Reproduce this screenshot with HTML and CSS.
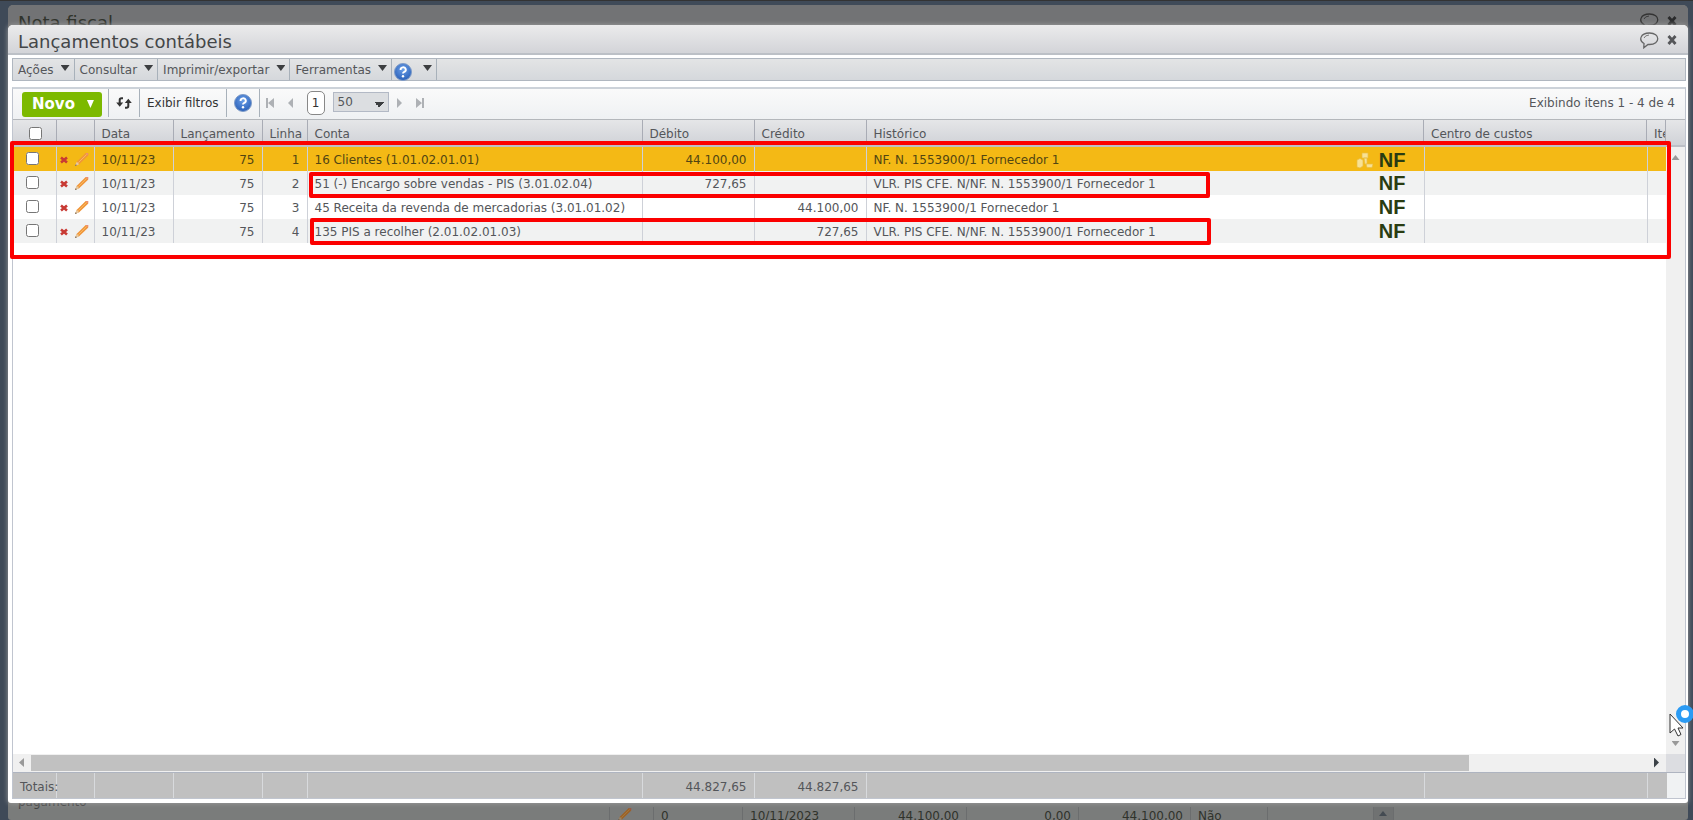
FILE: index.html
```html
<!DOCTYPE html>
<html lang="pt-BR">
<head>
<meta charset="utf-8">
<title>Lançamentos contábeis</title>
<link rel="stylesheet" href="styles.css">
</head>
<body>
<svg class="defs" aria-hidden="true">
  <defs>
    <radialGradient id="blue" cx="50%" cy="35%" r="65%"><stop offset="0" stop-color="#6b9fe8"/><stop offset="1" stop-color="#2a60b8"/></radialGradient>
  </defs>
  <symbol id="help" viewBox="0 0 18 18"><circle cx="9" cy="9" r="8.5" fill="url(#blue)" stroke="#7f9cc8"/><path d="M6.6 7 A2.6 2.4 0 1 1 10 9 Q9 9.5 9 10.6" fill="none" stroke="#fff" stroke-width="1.9"/><circle cx="9" cy="13.2" r="1.2" fill="#fff"/></symbol>
  <symbol id="pencil" viewBox="0 0 16 16"><path d="M1 15 L3 10.5 L12.5 1 L15.2 1.2 L15 4 L5.5 13 Z" fill="#f0953a"/><path d="M1 15 L3 10.5 L5.5 13 Z" fill="#e6cba4"/><path d="M1 15 L2 13 L3 14 Z" fill="#555"/><path d="M12.5 1 L15.2 1.2 L15 4 Z" fill="#ec8a78"/><path d="M4.5 11.5 L13.5 2.6" stroke="#f9bd62" stroke-width="1"/></symbol>
  <symbol id="cross" viewBox="0 0 8 8"><path d="M1 1.500 L7 6.500 M7 1.500 L1 6.500" stroke="#c83a34" stroke-width="2.600"/></symbol>
  <symbol id="close" viewBox="0 0 10 10"><path d="M1.5 1 L8.5 9 M8.5 1 L1.5 9" stroke="#555659" stroke-width="2.8"/></symbol>
  <symbol id="bubble" viewBox="0 0 19 17"><path d="M4 11.500 C-1.500 8.500 0 1 9.500 1 C20.500 1 20.500 12.500 9.500 12.500 H8 L3.800 15.800 Z" fill="none" stroke="#666" stroke-width="1.300"/><path d="M4 6 Q5 3.300 9 3" fill="none" stroke="#777"/></symbol>
  <symbol id="boxes" viewBox="0 0 17 17"><path d="M6 1 h6 v5 h-6 Z M1 8 l3-1.500 l3 1.500 v6 l-3 2 l-3-1 Z M8 6 h3 v6 h-2 Z M10 12 h7 l-1 3.500 h-5 Z" fill="#f8e194" stroke="#e8be45" stroke-width=".7"/></symbol>
</svg>

<section class="window window-back" aria-hidden="true">
  <header class="titlebar"><h2 class="title">Nota fiscal</h2>
    <span class="window-tools"><svg class="bubble"><use href="#bubble"/></svg><svg class="close"><use href="#close"/></svg></span></header>
  <div class="back-body"><span class="back-label">pagamento</span>
    <div class="back-grid"><span><svg class="pencil"><use href="#pencil"/></svg></span><span>0</span><span>10/11/2023</span><span class="num">44.100,00</span><span class="num">0,00</span><span class="num">44.100,00</span><span>Não</span><span></span><span class="back-scroll"><i class="arrow up"></i></span><span></span></div>
  </div>
</section>

<main class="window window-front">
  <header class="titlebar"><h1 class="title">Lançamentos contábeis</h1>
    <span class="window-tools"><button aria-label="Comentários"><svg class="bubble"><use href="#bubble"/></svg></button><button aria-label="Fechar"><svg class="close"><use href="#close"/></svg></button></span></header>
  <div class="content">
    <nav class="menubar">
      <button>Ações<i class="caret"></i></button><button>Consultar<i class="caret"></i></button><button>Imprimir/exportar<i class="caret"></i></button><button>Ferramentas<i class="caret"></i></button><button class="menu-help" aria-label="Ajuda"><svg class="help"><use href="#help"/></svg><i class="caret"></i></button>
    </nav>
    <section class="panel">
      <div class="toolbar">
        <div class="tool"><button class="new">Novo<i class="caret"></i></button></div>
        <div class="tool"><button aria-label="Atualizar"><svg width="16" height="12" viewBox="0 0 16 12"><path d="M7 1.200 H5.500 Q3.700 1.200 3.700 3 V7" fill="none" stroke="#333" stroke-width="2"/><path d="M0 4.500 H7.200 M8.800 7 H16" stroke="#333" stroke-width="0"/><path d="M.2 5.500 H7.200 L3.700 9.800 Z M8.800 6 L12.300 1.700 L15.800 6 Z" fill="#333"/><path d="M12.300 5 V9 Q12.300 10.800 10.500 10.800 H9" fill="none" stroke="#333" stroke-width="2"/></svg></button></div>
        <div class="tool"><button>Exibir filtros</button></div>
        <div class="tool"><button aria-label="Ajuda"><svg class="help"><use href="#help"/></svg></button></div>
        <div class="pager">
          <button aria-label="Primeira"><svg width="8" height="10"><path d="M0 0 H2 V10 H0 Z M8 0 V10 L2 5 Z"/></svg></button>
          <button aria-label="Anterior"><svg width="5" height="10"><path d="M5 0 V10 L0 5 Z"/></svg></button>
          <input class="page" aria-label="Página" value="1">
          <select class="size" aria-label="Itens por página"><option>50</option></select>
          <button aria-label="Próxima"><svg width="5" height="10"><path d="M0 0 V10 L5 5 Z"/></svg></button>
          <button aria-label="Última"><svg width="8" height="10"><path d="M6 0 H8 V10 H6 Z M0 0 V10 L6 5 Z"/></svg></button>
        </div>
        <span class="count">Exibindo itens 1 - 4 de 4</span>
      </div>
      <div class="head">
        <table class="grid">
          <colgroup><col class="c-check"><col class="c-act"><col class="c-date"><col class="c-entry"><col class="c-line"><col class="c-account"><col class="c-money"><col class="c-money"><col><col class="c-cost"><col class="c-item"></colgroup>
          <thead><tr><th class="check"><input type="checkbox" aria-label="Selecionar todos"></th><th></th><th>Data</th><th>Lançamento</th><th>Linha</th><th>Conta</th><th>Débito</th><th>Crédito</th><th>Histórico</th><th>Centro de custos</th><th>Ite</th></tr></thead>
        </table>
      </div>
      <div class="body">
        <div class="rows">
          <table class="grid">
            <colgroup><col class="c-check"><col class="c-act"><col class="c-date"><col class="c-entry"><col class="c-line"><col class="c-account"><col class="c-money"><col class="c-money"><col><col class="c-cost"><col class="c-item"></colgroup>
            <tbody>
              <tr class="selected"><td class="check"><input type="checkbox" aria-label="Linha 1"></td><td class="acts-cell"><div class="acts"><svg class="cross"><use href="#cross"/></svg><svg class="pencil"><use href="#pencil"/></svg></div></td><td>10/11/23</td><td class="num">75</td><td class="num">1</td><td>16 Clientes (1.01.02.01.01)</td><td class="num">44.100,00</td><td></td><td><div class="hist">NF. N. 1553900/1 Fornecedor 1<span class="marks"><svg class="boxes"><use href="#boxes"/></svg><b class="nf">NF</b></span></div></td><td></td><td></td></tr>
              <tr><td class="check"><input type="checkbox" aria-label="Linha 2"></td><td class="acts-cell"><div class="acts"><svg class="cross"><use href="#cross"/></svg><svg class="pencil"><use href="#pencil"/></svg></div></td><td>10/11/23</td><td class="num">75</td><td class="num">2</td><td>51 (-) Encargo sobre vendas - PIS (3.01.02.04)</td><td class="num">727,65</td><td></td><td><div class="hist">VLR. PIS CFE. N/NF. N. 1553900/1 Fornecedor 1<span class="marks"><b class="nf">NF</b></span></div></td><td></td><td></td></tr>
              <tr><td class="check"><input type="checkbox" aria-label="Linha 3"></td><td class="acts-cell"><div class="acts"><svg class="cross"><use href="#cross"/></svg><svg class="pencil"><use href="#pencil"/></svg></div></td><td>10/11/23</td><td class="num">75</td><td class="num">3</td><td>45 Receita da revenda de mercadorias (3.01.01.02)</td><td></td><td class="num">44.100,00</td><td><div class="hist">NF. N. 1553900/1 Fornecedor 1<span class="marks"><b class="nf">NF</b></span></div></td><td></td><td></td></tr>
              <tr><td class="check"><input type="checkbox" aria-label="Linha 4"></td><td class="acts-cell"><div class="acts"><svg class="cross"><use href="#cross"/></svg><svg class="pencil"><use href="#pencil"/></svg></div></td><td>10/11/23</td><td class="num">75</td><td class="num">4</td><td>135 PIS a recolher (2.01.02.01.03)</td><td></td><td class="num">727,65</td><td><div class="hist">VLR. PIS CFE. N/NF. N. 1553900/1 Fornecedor 1<span class="marks"><b class="nf">NF</b></span></div></td><td></td><td></td></tr>
            </tbody>
          </table>
          <div class="note note-all"></div><div class="note note-two"></div><div class="note note-four"></div>
        </div>
        <div class="vscroll"><i class="arrow up"></i><i class="arrow down"></i></div>
        <div class="hscroll"><i class="arrow left"></i><div class="track"><div class="thumb"></div></div><i class="arrow right"></i></div>
        <div class="corner"></div>
      </div>
      <div class="foot">
        <table class="grid">
          <colgroup><col class="c-check"><col class="c-act"><col class="c-date"><col class="c-entry"><col class="c-line"><col class="c-account"><col class="c-money"><col class="c-money"><col><col class="c-cost"><col class="c-item"></colgroup>
          <tbody><tr><td class="total">Totais:</td><td></td><td></td><td></td><td></td><td></td><td class="num">44.827,65</td><td class="num">44.827,65</td><td></td><td></td><td></td></tr></tbody>
        </table>
      </div>
    </section>
  </div>
</main>
<svg class="cursor" width="26" height="34" viewBox="0 0 26 34" aria-hidden="true"><circle cx="16" cy="10" r="6.500" fill="#fff" stroke="#2b9bf4" stroke-width="5"/><path d="M1 10 V29 L5.500 25 L9 32 L12 30.500 L9 24 H14 Z" fill="#fff" stroke="#333"/></svg>
</body>
</html>
```
FILE: styles.css
```css
* { box-sizing: border-box; }
body { margin: 0; height: 100vh; overflow: hidden; background: #3f4a58; border-top: 1px solid #333; font: 12px "DejaVu Sans", Verdana, sans-serif; color: #54565a; }
.defs { position: absolute; width: 0; height: 0; }
svg { display: block; fill: currentColor; flex: none; }
button { display: flex; align-items: center; margin: 0; padding: 0; border: 0; background: none; font: inherit; color: inherit; }
.window { position: absolute; display: flex; flex-direction: column; border-radius: 5px 5px 3px 3px; }
.window-back { inset: 5px 5px 0 8px; overflow: hidden; background: #7a7c7b; color: #30332c; }
.window-front { inset: 25px 5px 17px 8px; background: #fff; box-shadow: 0 0 5px #a0a0a0; }
.titlebar { display: flex; align-items: center; justify-content: space-between; height: 30px; flex: none; padding: 2px 11px 0 10px; border-bottom: 2px solid #bcc0c6; border-radius: 5px 5px 0 0; background: linear-gradient(#ebebec, #d3d4d8); }
.window-back .titlebar { background: #727375; border: 0; }
.title { margin: 0; padding-top: 4px; font-size: 18px; font-weight: 400; line-height: 24px; color: #444648; }
.window-back .title { color: #30332c; }
.window-tools { display: flex; align-items: center; gap: 8px; }
.bubble { width: 19px; height: 17px; }
.close { width: 10px; height: 10px; }
.window-back .window-tools { filter: brightness(.5); }
.back-body { flex: 1; display: flex; flex-direction: column; justify-content: flex-end; }
.back-label { padding-left: 10px; color: #444; line-height: 10px; }
.back-grid { display: grid; grid-template-columns: 44px 89px 112px 112px 112px 112px 77px 106px 20px 1fr; height: 13px; margin-left: 601px; line-height: 18px; }
.back-grid span { border-left: 1px solid #6b6d6e; padding: 0 7px; }
.back-grid .num { padding: 0 7px 0 0; text-align: right; }
.back-grid .pencil { filter: brightness(.65); }
.back-grid .back-scroll { display: flex; padding: 4px 5px; background: #707272; }
.back-grid .arrow { background: #444b52; }
.content { flex: 1; min-height: 0; display: flex; flex-direction: column; gap: 6px; padding: 3px 2px 4px 4px; }
.menubar { display: flex; flex: none; height: 23px; border: 1px solid #b0b7c0; background: linear-gradient(#e3e4e5, #d5d8dc); }
.menubar button { gap: 7px; padding: 0 4px 0 5px; border-right: 1px solid #a8b1ba; }
.caret { width: 9px; height: 6px; margin-bottom: 3px; background: #3c3e40; clip-path: polygon(0 0, 100% 0, 50% 100%); }
.menubar .menu-help { gap: 11px; padding: 0 4px 0 2px; }
.help { width: 18px; height: 18px; }
.menu-help .help { margin-top: 4px; }
.panel { flex: 1; min-height: 0; display: flex; flex-direction: column; border: 1px solid #c0c5cf; border-top: 2px solid #ccd2d9; }
.toolbar { display: flex; align-items: center; flex: none; height: 30px; padding: 0 10px 2px 9px; background: linear-gradient(#fafafa, #eff1f3); }
.tool { display: flex; align-items: center; height: 28px; padding: 0 7px; border-right: 1px solid #a8b1ba; color: #333; }
.tool:first-child { padding: 2px 6px 0 0; }
.new { height: 25px; gap: 12px; padding: 0 8px 0 10px; border-radius: 3px; background: #7cb900; color: #fff; font-size: 15px; font-weight: 700; }
.new .caret { width: 7px; height: 8px; margin: 0; background: #fff; }
.pager { display: flex; align-items: center; color: #aeb1b5; padding-left: 6px; gap: 14px; }
.page { width: 18px; height: 24px; padding: 0; border: 1px solid #888; border-radius: 5px; background: #fff; font: inherit; color: #333; text-align: center; }
.size { appearance: none; width: 56px; height: 20px; margin: 0 -6px 2px; padding: 0 4px; border: 1px solid #b3b9c5; border-radius: 0; font: inherit; color: #54565a; background: linear-gradient(to top right, #0000 50%, #3c3e40 50%) 40px 9px / 5px 5px no-repeat, linear-gradient(to top left, #0000 50%, #3c3e40 50%) 45px 9px / 5px 5px no-repeat, #dcdee1; }
.count { margin-left: auto; }
.head { flex: none; padding-right: 19px; border-top: 1px solid #b4b7bb; border-bottom: 2px solid #bcbfc6; background: linear-gradient(#e5e6e8, #d0d2d7); }
.grid { width: 100%; table-layout: fixed; border-collapse: collapse; }
.c-check { width: 43px; } .c-act { width: 38px; } .c-date { width: 79px; } .c-entry { width: 89px; } .c-line { width: 45px; }
.c-account { width: 335px; } .c-money { width: 112px; } .c-cost { width: 223px; } .c-item { width: 19px; }
.grid th, .grid td { height: 24px; padding: 2px 7px 0; border-right: 1px solid #ced1d8; overflow: hidden; white-space: nowrap; text-align: left; font-weight: 400; line-height: 16px; }
.grid th { height: 25px; border-color: #a9acb5; padding-top: 3px; }
.grid td:last-child { border-right: 0; }
.grid th:last-child { padding-right: 0; }
.grid .num { text-align: right; }
.grid .check { padding: 0 0 0 3px; text-align: center; }
.check input { width: 13px; height: 13px; margin: 0; vertical-align: middle; }
tbody .check input { margin: 0 6px 2px 0; }
.grid .acts-cell { padding: 1px 5px 0 3px; }
.acts { display: flex; align-items: center; justify-content: space-between; }
.cross { width: 8px; height: 8px; }
.pencil { width: 15px; height: 15px; }
.selected { background: #f4b915; color: #514512; }
.rows tr:nth-child(even) { background: #f1f2f2; }
.hist, .marks { display: flex; align-items: center; justify-content: space-between; }
.hist { height: 20px; }
.marks { gap: 6px; padding: 0 11px 2px 0; }
.selected .marks { padding-bottom: 0; }
.boxes { width: 17px; height: 17px; }
.nf { font: 700 20px/20px "Liberation Sans", Arial, sans-serif; color: #293c12; }
.body { flex: 1; min-height: 0; display: grid; grid-template: 1fr 18px / 1fr 19px; }
.rows { position: relative; background: #fff; }
.note { position: absolute; border: 4px solid #fb0000; border-radius: 2px; pointer-events: none; }
.note-all { inset: -6px -5px auto -3px; height: 118px; }
.note-two { left: 296px; top: 25px; width: 901px; height: 26px; }
.note-four { left: 297px; top: 71px; width: 901px; height: 27px; }
.vscroll { display: flex; flex-direction: column; align-items: center; justify-content: space-between; padding: 8px 0; background: #f0f0f0; }
.arrow { width: 8px; height: 5px; background: #999; }
.up { clip-path: polygon(0 100%, 50% 0, 100% 100%); }
.down { clip-path: polygon(0 0, 100% 0, 50% 100%); }
.left { width: 5px; height: 9px; clip-path: polygon(100% 0, 100% 100%, 0 50%); }
.right { width: 5px; height: 10px; background: #3c4248; clip-path: polygon(0 0, 100% 50%, 0 100%); }
.hscroll { display: flex; align-items: center; justify-content: space-between; padding: 0 7px 1px 6px; gap: 7px; background: #f0f0f0; }
.track { flex: 1; }
.thumb { width: 89%; height: 16px; background: #c1c1c1; }
.corner { background: #dcdde1; }
.foot { flex: none; padding-right: 19px; border-top: 1px solid #aeb4c0; background: linear-gradient(#c0c0c0, #c0c0c0) 0 0 / calc(100% - 18px) 100% no-repeat, #f0f2f3; }
.foot td { height: 25px; border-color: #d8dadd; }
.foot .total { overflow: visible; }
.cursor { position: absolute; right: -2px; top: 704px; }
```
